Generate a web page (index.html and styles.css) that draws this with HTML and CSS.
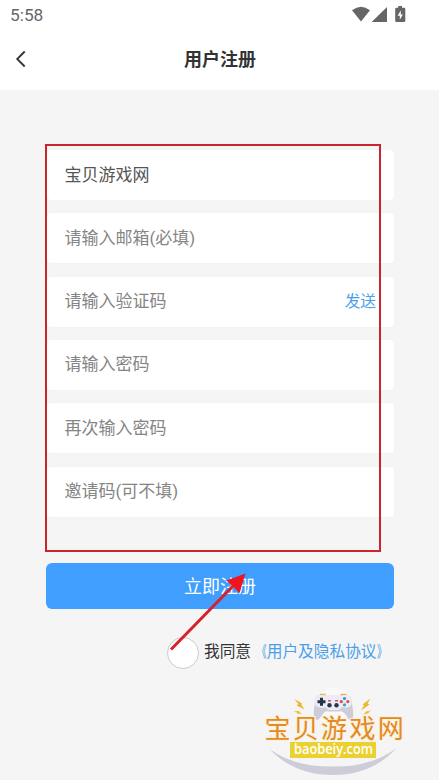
FILE: index.html
```
<!DOCTYPE html>
<html lang="zh-CN">
<head>
<meta charset="UTF-8">
<title>用户注册</title>
<link rel="stylesheet" href="styles.css">
</head>
<body>
<header class="top">
  <div class="status">
    <span class="time">5:58</span>
    <svg class="status-icons" width="56" height="18" viewBox="0 0 56 18" fill="#666">
      <path d="M0 3.200Q9 -3.800 18 3.200L9 14.600Z"/>
      <path d="M35 0V15H19.600Z"/>
      <path fill-rule="evenodd" d="M46.200 -1h3.800v1.800h2q1.300 0 1.300 1.300v11.700q0 1.300-1.300 1.300h-7.500q-1.300 0-1.300-1.300V2.100q0-1.300 1.300-1.300h1.700ZM48.800 3.500 45.600 8.700h2.200v4l3.100-5.200h-2.100Z"/>
    </svg>
  </div>
  <div class="nav">
    <svg class="back" width="12" height="18" viewBox="0 0 12 18"><path d="M9.700 1.500 2.200 9l7.500 7.500" fill="none" stroke="#333" stroke-width="1.800"/></svg>
    <h1>用户注册</h1>
  </div>
</header>
<main>
  <form class="form">
    <div class="field filled">宝贝游戏网</div>
    <div class="field">请输入邮箱(必填)</div>
    <div class="field">请输入验证码<a class="send">发送</a></div>
    <div class="field">请输入密码</div>
    <div class="field">再次输入密码</div>
    <div class="field">邀请码(可不填)</div>
  </form>
  <div class="submit">立即注册</div>
  <div class="agree"><i class="check"></i><span>我同意<a><b class="open">《</b>用户及隐私协议<b class="close">》</b></a></span></div>
</main>
<div class="highlight"></div>
<svg class="arrow" width="90" height="90" viewBox="165 565 90 90">
  <path d="M171 649.500 235 584" stroke="#d9202a" stroke-width="3"/>
  <path d="M245.500 573.500 239.500 593 226.500 580.500Z" fill="#ed1520"/>
</svg>
<svg class="logo" width="150" height="95" viewBox="260 685 150 95">
  <circle cx="334" cy="707" r="19" fill="#f9f9fa"/>
  <path d="M269.500 749Q294 767 333 766.500 372 767 396.500 748 372 775 333 775 294 775 269.500 749Z" fill="#cdcdda"/>
  <path d="M320 694.800h5.500M340.500 694.800h6" stroke="#edb34c" stroke-width="2"/>
  <path d="M316.500 696.500Q321 694 326.500 695.800H341Q346 694 350 696.500 352 699 352.500 707 354 715 352.500 719 349.500 722 346 715 342.500 710 339 711.500H329Q324.500 710 321.500 716 317 723 314.500 718 313 714 314.500 706 314.500 698 316.500 696.500Z" fill="#cdccd9"/>
  <path d="M316.500 696.500Q321 694 326.500 695.800H341Q346 694 350 696.500 352 699 351.500 704 349 709.500 342.500 707L339 710H329L325.500 707.500Q318.500 709 314.500 704 314.500 698 316.500 696.500Z" fill="#ececf4"/>
  <path d="M317.500 701.700h8M321.500 697.700v8" stroke="#243548" stroke-width="3"/>
  <circle cx="329.500" cy="705.300" r="2.200" fill="#29384d"/>
  <circle cx="336.500" cy="705.300" r="2.200" fill="#29384d"/>
  <path d="M328 700.800h3M335 700.800h3" stroke="#d64c68" stroke-width="1.500"/>
  <circle cx="344.500" cy="698.500" r="1.600" fill="#438fc4"/>
  <circle cx="341.300" cy="701.600" r="1.600" fill="#d94e5f"/>
  <circle cx="347.800" cy="701.600" r="1.600" fill="#d94e5f"/>
  <circle cx="344.500" cy="704.800" r="1.600" fill="#38a5b5"/>
  <path fill="#efb62e" d="M294 699 301.500 703 301.500 705 304.500 709.500 296.500 705.500 298.500 704ZM293.500 711.500 299 711 299.500 712.300 302.500 713.700 297 713.500 297 712.500ZM370.500 698.500 367.500 703.500 369.500 704.500 361 710.500 364 705.500 362.500 704.500ZM371.500 710.500 366 711.500 365.500 712.500 363 714.500 369 713 368.500 712Z"/>
  <text class="brand" x="264.500" y="738">宝贝游戏网</text>
  <path fill="#ead12f" d="M290 742h86v16H290Z"/>
  <text class="domain" x="294" y="754.200" textLength="79" lengthAdjust="spacingAndGlyphs">baobeiy.com</text>
</svg>
</body>
</html>
```
FILE: styles.css
```
* { box-sizing: border-box; }
body {
  position: relative;
  margin: 0;
  width: 439px;
  height: 780px;
  overflow: hidden;
  background: #f5f5f5;
  font-family: Roboto, "Noto Sans CJK SC", sans-serif;
  color: #333;
}
.top { height: 90px; background: #fff; }
.status {
  display: flex;
  justify-content: space-between;
  height: 30px;
  padding: 7px 31px 0 10px;
}
.time { margin-top: -2px; font-size: 17.300px; line-height: 20px; color: #666; }
.status-icons { overflow: visible; }
.nav {
  display: grid;
  grid-template-columns: 61px 1fr 60px;
  align-items: center;
  height: 58px;
}
.back { margin-left: 15px; }
h1 {
  margin: 0;
  padding-top: 2px;
  font-size: 18px;
  font-weight: 700;
  line-height: 26px;
  text-align: center;
}
main { padding: 60px 45px 0 46px; }
.form { display: flex; flex-direction: column; gap: 13.330px; padding: 0 0 0 1px; }
.field {
  display: flex;
  align-items: center;
  justify-content: space-between;
  height: 50px;
  padding: 0 18px 4px 17.500px;
  border-radius: 4px;
  background: #fff;
  box-shadow: 0 0 1px #e8e8e8;
  font-family: Roboto, "Noto Sans CJK SC", sans-serif;
  font-size: 17px;
  font-weight: 400;
  color: #858585;
}
.filled { color: #555; }
.send { padding-top: 1px; font-size: 15.700px; color: #4a9fe8; }
.submit {
  height: 46px;
  margin-top: 46.350px;
  border-radius: 6px;
  background: #409eff;
  color: #fff;
  font-family: "Noto Sans CJK SC", sans-serif;
  font-size: 18px;
  font-weight: 400;
  line-height: 45px;
  text-align: center;
}
.agree { display: flex; gap: 5px; margin: 28px 0 0 121px; }
.check { flex: none; width: 32px; height: 32px; border: 1px solid #ccc; border-radius: 50%; background: #fff; }
.agree span { font-size: 15.700px; line-height: 30px; white-space: nowrap; }
.agree a { color: #4a9fe8; }
.agree b { display: inline-block; font-weight: 400; }
.open { transform: scaleX(.62); transform-origin: right; }
.close { transform: scaleX(.62); transform-origin: left; }
.highlight { position: absolute; left: 45px; top: 144px; width: 336px; height: 408px; border: 2px solid #c9252f; }
.arrow { position: absolute; left: 165px; top: 565px; }
.logo { position: absolute; left: 260px; top: 685px; }
.brand {
  font: 400 26px "Noto Sans CJK SC", sans-serif;
  letter-spacing: 2.300px;
  fill: #e28a25;
  stroke: #fff0d8;
  stroke-width: 2px;
  paint-order: stroke;
}
.domain { font: 600 14.500px "Open Sans", sans-serif; fill: #fff; }
```
